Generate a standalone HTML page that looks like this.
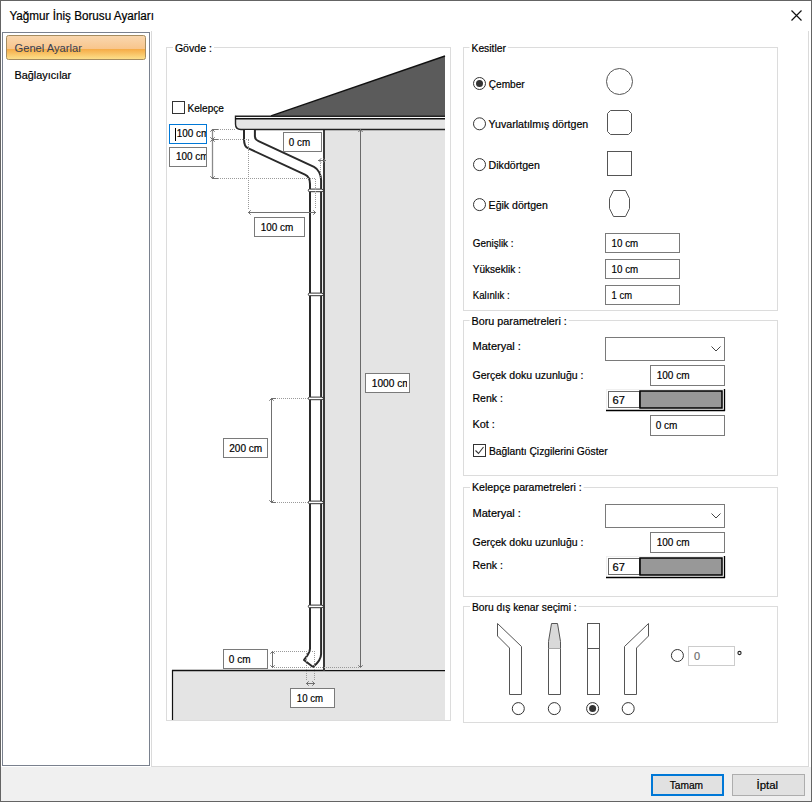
<!DOCTYPE html>
<html><head><meta charset="utf-8"><style>
html,body{margin:0;padding:0;background:#fff;}
svg{display:block;font-family:"Liberation Sans",sans-serif;} text{stroke:currentColor;stroke-width:0.2px;}
</style></head><body>
<svg width="812" height="802" viewBox="0 0 812 802">
<rect x="0" y="0" width="812" height="802" fill="#ffffff"/>
<rect x="1" y="767" width="810" height="34" fill="#f0f0f0"/>
<rect x="0.5" y="0.5" width="811" height="801" fill="none" stroke="#646464" stroke-width="1"/>
<rect x="2.5" y="32.5" width="147" height="733" fill="#fff" stroke="#7a818e" stroke-width="1"/>
<line x1="151.5" y1="31" x2="151.5" y2="767" stroke="#dadada" stroke-width="1"/>
<line x1="808.5" y1="31" x2="808.5" y2="767" stroke="#dadada" stroke-width="1"/>
<line x1="151" y1="766.5" x2="809" y2="766.5" stroke="#dadada" stroke-width="1"/>
<defs><linearGradient id="sel" x1="0" y1="0" x2="0" y2="1"><stop offset="0" stop-color="#f9d8b0"/><stop offset="0.55" stop-color="#f8c58c"/><stop offset="0.56" stop-color="#f5aa45"/><stop offset="1" stop-color="#fde28e"/></linearGradient></defs>
<rect x="6.5" y="35.5" width="139" height="24" rx="2" fill="url(#sel)" stroke="#a58c60"/>
<text x="9.4" y="20" font-size="12" fill="#000" style="color:#000" text-anchor="start" textLength="144.5" lengthAdjust="spacingAndGlyphs">Yağmur İniş Borusu Ayarları</text>
<path d="M791.5 10.5 L801.5 20.5 M801.5 10.5 L791.5 20.5" stroke="#111" stroke-width="1.2" fill="none"/>
<text x="14.5" y="52" font-size="11.5" fill="#3a4152" style="color:#3a4152;stroke-width:0.05px" text-anchor="start" textLength="67.4" lengthAdjust="spacingAndGlyphs">Genel Ayarlar</text>
<text x="14.5" y="78.6" font-size="11.5" fill="#000" style="color:#000" text-anchor="start" textLength="56.7" lengthAdjust="spacingAndGlyphs">Bağlayıcılar</text>
<line x1="166.5" y1="47" x2="166.5" y2="721" stroke="#dcdcdc" stroke-width="1"/>
<line x1="450.5" y1="47" x2="450.5" y2="721" stroke="#dcdcdc" stroke-width="1"/>
<line x1="166" y1="720.5" x2="451" y2="720.5" stroke="#dcdcdc" stroke-width="1"/>
<line x1="166" y1="47.5" x2="173" y2="47.5" stroke="#dcdcdc" stroke-width="1"/>
<line x1="214" y1="47.5" x2="451" y2="47.5" stroke="#dcdcdc" stroke-width="1"/>
<text x="174.9" y="51.8" font-size="11" fill="#000" style="color:#000" text-anchor="start" textLength="37" lengthAdjust="spacingAndGlyphs">Gövde :</text>
<line x1="463.5" y1="47" x2="463.5" y2="311" stroke="#dcdcdc" stroke-width="1"/>
<line x1="777.5" y1="47" x2="777.5" y2="311" stroke="#dcdcdc" stroke-width="1"/>
<line x1="463" y1="310.5" x2="778" y2="310.5" stroke="#dcdcdc" stroke-width="1"/>
<line x1="463" y1="47.5" x2="469.5" y2="47.5" stroke="#dcdcdc" stroke-width="1"/>
<line x1="507.9" y1="47.5" x2="778" y2="47.5" stroke="#dcdcdc" stroke-width="1"/>
<text x="471.5" y="51.7" font-size="11" fill="#000" style="color:#000" text-anchor="start" textLength="34.4" lengthAdjust="spacingAndGlyphs">Kesitler</text>
<line x1="463.5" y1="320" x2="463.5" y2="476" stroke="#dcdcdc" stroke-width="1"/>
<line x1="777.5" y1="320" x2="777.5" y2="476" stroke="#dcdcdc" stroke-width="1"/>
<line x1="463" y1="475.5" x2="778" y2="475.5" stroke="#dcdcdc" stroke-width="1"/>
<line x1="463" y1="320.5" x2="469.6" y2="320.5" stroke="#dcdcdc" stroke-width="1"/>
<line x1="568.8000000000001" y1="320.5" x2="778" y2="320.5" stroke="#dcdcdc" stroke-width="1"/>
<text x="471.6" y="325" font-size="11" fill="#000" style="color:#000" text-anchor="start" textLength="95.2" lengthAdjust="spacingAndGlyphs">Boru parametreleri :</text>
<line x1="463.5" y1="487" x2="463.5" y2="597" stroke="#dcdcdc" stroke-width="1"/>
<line x1="777.5" y1="487" x2="777.5" y2="597" stroke="#dcdcdc" stroke-width="1"/>
<line x1="463" y1="596.5" x2="778" y2="596.5" stroke="#dcdcdc" stroke-width="1"/>
<line x1="463" y1="487.5" x2="470" y2="487.5" stroke="#dcdcdc" stroke-width="1"/>
<line x1="583.7" y1="487.5" x2="778" y2="487.5" stroke="#dcdcdc" stroke-width="1"/>
<text x="472" y="491" font-size="11" fill="#000" style="color:#000" text-anchor="start" textLength="109.7" lengthAdjust="spacingAndGlyphs">Kelepçe parametreleri :</text>
<line x1="463.5" y1="606" x2="463.5" y2="723" stroke="#dcdcdc" stroke-width="1"/>
<line x1="777.5" y1="606" x2="777.5" y2="723" stroke="#dcdcdc" stroke-width="1"/>
<line x1="463" y1="722.5" x2="778" y2="722.5" stroke="#dcdcdc" stroke-width="1"/>
<line x1="463" y1="606.5" x2="470" y2="606.5" stroke="#dcdcdc" stroke-width="1"/>
<line x1="578.7" y1="606.5" x2="778" y2="606.5" stroke="#dcdcdc" stroke-width="1"/>
<text x="472" y="610.7" font-size="11" fill="#000" style="color:#000" text-anchor="start" textLength="104.7" lengthAdjust="spacingAndGlyphs">Boru dış kenar seçimi :</text>
<circle cx="479.5" cy="83.5" r="6" fill="#fff" stroke="#333" stroke-width="1"/>
<circle cx="479.5" cy="83.5" r="3.5" fill="#333"/>
<text x="488.7" y="87.9" font-size="11" fill="#000" style="color:#000" text-anchor="start" textLength="36" lengthAdjust="spacingAndGlyphs">Çember</text>
<circle cx="479.5" cy="123.8" r="6" fill="#fff" stroke="#333" stroke-width="1"/>
<text x="488.6" y="128.1" font-size="11" fill="#000" style="color:#000" text-anchor="start" textLength="99.6" lengthAdjust="spacingAndGlyphs">Yuvarlatılmış dörtgen</text>
<circle cx="479.5" cy="164.6" r="6" fill="#fff" stroke="#333" stroke-width="1"/>
<text x="488.6" y="168.7" font-size="11" fill="#000" style="color:#000" text-anchor="start" textLength="51.3" lengthAdjust="spacingAndGlyphs">Dikdörtgen</text>
<circle cx="479.5" cy="204.6" r="6" fill="#fff" stroke="#333" stroke-width="1"/>
<text x="488.6" y="208.5" font-size="11" fill="#000" style="color:#000" text-anchor="start" textLength="59.2" lengthAdjust="spacingAndGlyphs">Eğik dörtgen</text>
<circle cx="619.5" cy="81.5" r="13" fill="none" stroke="#555"/>
<path d="M610.5 110.5 H628.5 L631.5 113.5 V131.5 L628.5 134.5 H610.5 L607.5 131.5 V113.5 Z" fill="none" stroke="#555"/>
<rect x="607.5" y="151.5" width="24" height="24" fill="none" stroke="#555" stroke-width="1"/>
<path d="M613.5 190.5 H625.5 L629.5 198.5 V208.5 L625.5 216.5 H613.5 L609.5 208.5 V198.5 Z" fill="none" stroke="#555"/>
<text x="472.8" y="247.3" font-size="11" fill="#000" style="color:#000" text-anchor="start" textLength="40.8" lengthAdjust="spacingAndGlyphs">Genişlik :</text>
<text x="472.8" y="273" font-size="11" fill="#000" style="color:#000" text-anchor="start" textLength="48" lengthAdjust="spacingAndGlyphs">Yükseklik :</text>
<text x="472.8" y="299" font-size="11" fill="#000" style="color:#000" text-anchor="start" textLength="37" lengthAdjust="spacingAndGlyphs">Kalınlık :</text>
<rect x="605.5" y="233.5" width="74" height="19" fill="#fff" stroke="#7a7a7a" stroke-width="1"/>
<text x="611.6" y="246.8" font-size="11" fill="#000" style="color:#000" text-anchor="start" textLength="26.6" lengthAdjust="spacingAndGlyphs">10 cm</text>
<rect x="605.5" y="259.5" width="74" height="19" fill="#fff" stroke="#7a7a7a" stroke-width="1"/>
<text x="611.6" y="272.9" font-size="11" fill="#000" style="color:#000" text-anchor="start" textLength="26.6" lengthAdjust="spacingAndGlyphs">10 cm</text>
<rect x="605.5" y="285.5" width="74" height="19" fill="#fff" stroke="#7a7a7a" stroke-width="1"/>
<text x="611.6" y="299" font-size="11" fill="#000" style="color:#000" text-anchor="start" textLength="20.4" lengthAdjust="spacingAndGlyphs">1 cm</text>
<text x="472.5" y="349.9" font-size="11" fill="#000" style="color:#000" text-anchor="start" textLength="48.4" lengthAdjust="spacingAndGlyphs">Materyal :</text>
<text x="472.5" y="378.9" font-size="11" fill="#000" style="color:#000" text-anchor="start" textLength="111" lengthAdjust="spacingAndGlyphs">Gerçek doku uzunluğu :</text>
<text x="472.5" y="401.8" font-size="11" fill="#000" style="color:#000" text-anchor="start" textLength="30.4" lengthAdjust="spacingAndGlyphs">Renk :</text>
<rect x="605.5" y="337.5" width="119" height="23" fill="#fff" stroke="#7a7a7a" stroke-width="1"/>
<path d="M711.5 346.5 L716 351 L720.5 346.5" fill="none" stroke="#444" stroke-width="1"/>
<rect x="650.5" y="365.5" width="74" height="20" fill="#fff" stroke="#7a7a7a" stroke-width="1"/>
<text x="656.7" y="379.1" font-size="11" fill="#000" style="color:#000" text-anchor="start" textLength="32.8" lengthAdjust="spacingAndGlyphs">100 cm</text>
<line x1="606" y1="389.5" x2="724" y2="389.5" stroke="#f0f0f0" stroke-width="1"/>
<line x1="606.5" y1="389" x2="606.5" y2="410" stroke="#f0f0f0" stroke-width="1"/>
<rect x="608.5" y="391.5" width="31" height="16" fill="#fff" stroke="#6a6a6a" stroke-width="1"/>
<rect x="640" y="391" width="82" height="17" fill="#989898" stroke="#000" stroke-width="1.5"/>
<line x1="724.5" y1="389" x2="724.5" y2="411" stroke="#000" stroke-width="1.3"/>
<line x1="606" y1="410.5" x2="725" y2="410.5" stroke="#000" stroke-width="1.3"/>
<text x="612.6" y="404" font-size="11" fill="#000" style="color:#000" text-anchor="start" textLength="12.4" lengthAdjust="spacingAndGlyphs">67</text>
<text x="472.5" y="428" font-size="11" fill="#000" style="color:#000" text-anchor="start" textLength="22.4" lengthAdjust="spacingAndGlyphs">Kot :</text>
<rect x="650.5" y="415.5" width="74" height="20" fill="#fff" stroke="#7a7a7a" stroke-width="1"/>
<text x="655.7" y="429.1" font-size="11" fill="#000" style="color:#000" text-anchor="start" textLength="21.7" lengthAdjust="spacingAndGlyphs">0 cm</text>
<rect x="473.5" y="444.5" width="12" height="12" fill="#fff" stroke="#333" stroke-width="1"/>
<path d="M475.5 450.5 L478.5 453.5 L483.5 447" fill="none" stroke="#333" stroke-width="1.1"/>
<text x="488.9" y="454.7" font-size="11" fill="#000" style="color:#000" text-anchor="start" textLength="118.8" lengthAdjust="spacingAndGlyphs">Bağlantı Çizgilerini Göster</text>
<text x="472.5" y="516.9" font-size="11" fill="#000" style="color:#000" text-anchor="start" textLength="48.4" lengthAdjust="spacingAndGlyphs">Materyal :</text>
<text x="472.5" y="545.9" font-size="11" fill="#000" style="color:#000" text-anchor="start" textLength="111" lengthAdjust="spacingAndGlyphs">Gerçek doku uzunluğu :</text>
<text x="472.5" y="568.8" font-size="11" fill="#000" style="color:#000" text-anchor="start" textLength="30.4" lengthAdjust="spacingAndGlyphs">Renk :</text>
<rect x="605.5" y="504.5" width="119" height="23" fill="#fff" stroke="#7a7a7a" stroke-width="1"/>
<path d="M711.5 513.5 L716 518 L720.5 513.5" fill="none" stroke="#444" stroke-width="1"/>
<rect x="650.5" y="532.5" width="74" height="20" fill="#fff" stroke="#7a7a7a" stroke-width="1"/>
<text x="656.7" y="546.1" font-size="11" fill="#000" style="color:#000" text-anchor="start" textLength="32.8" lengthAdjust="spacingAndGlyphs">100 cm</text>
<line x1="606" y1="556.5" x2="724" y2="556.5" stroke="#f0f0f0" stroke-width="1"/>
<line x1="606.5" y1="556" x2="606.5" y2="577" stroke="#f0f0f0" stroke-width="1"/>
<rect x="608.5" y="558.5" width="31" height="16" fill="#fff" stroke="#6a6a6a" stroke-width="1"/>
<rect x="640" y="558" width="82" height="17" fill="#989898" stroke="#000" stroke-width="1.5"/>
<line x1="724.5" y1="556" x2="724.5" y2="578" stroke="#000" stroke-width="1.3"/>
<line x1="606" y1="577.5" x2="725" y2="577.5" stroke="#000" stroke-width="1.3"/>
<text x="612.6" y="571" font-size="11" fill="#000" style="color:#000" text-anchor="start" textLength="12.4" lengthAdjust="spacingAndGlyphs">67</text>
<path d="M497.5 623.5 V636 L509.5 648 V694.5 H521.5 V646.5 Z" fill="#fff" stroke="#555"/>
<path d="M551.5 623.5 H557.5 L560.5 641.5 V648.5 H548.5 V641.5 Z" fill="#d9d9d9" stroke="#555"/>
<path d="M548.5 648.5 V694.5 H560.5 V648.5" fill="#fff" stroke="#555"/>
<rect x="587.5" y="623.5" width="12" height="71" fill="#fff" stroke="#555" stroke-width="1"/>
<line x1="587.5" y1="648.5" x2="599.5" y2="648.5" stroke="#555" stroke-width="1"/>
<path d="M648.5 623.5 V636 L636.5 648 V694.5 H624.5 V646.5 Z" fill="#fff" stroke="#555"/>
<circle cx="518.3" cy="708.6" r="6" fill="#fff" stroke="#333" stroke-width="1"/>
<circle cx="554.3" cy="708.6" r="6" fill="#fff" stroke="#333" stroke-width="1"/>
<circle cx="592.6" cy="708.6" r="6" fill="#fff" stroke="#333" stroke-width="1"/>
<circle cx="592.6" cy="708.6" r="3.5" fill="#333"/>
<circle cx="628.2" cy="708.6" r="6" fill="#fff" stroke="#333" stroke-width="1"/>
<circle cx="677.4" cy="655.5" r="6" fill="#fff" stroke="#333" stroke-width="1"/>
<rect x="688.5" y="646.5" width="46" height="19" fill="#fff" stroke="#cccccc" stroke-width="1"/>
<text x="694" y="660" font-size="11" fill="#6d6d6d" style="color:#6d6d6d" text-anchor="start">0</text>
<circle cx="739.5" cy="653" r="1.6" fill="none" stroke="#222" stroke-width="1.1"/>
<rect x="652" y="775" width="71" height="20" fill="#e1e1e1" stroke="#0078d7" stroke-width="2"/>
<text x="686.4" y="789" font-size="11.5" fill="#000" style="color:#000" text-anchor="middle" textLength="33.4" lengthAdjust="spacingAndGlyphs">Tamam</text>
<rect x="732.5" y="774.5" width="72" height="21" fill="#e1e1e1" stroke="#adadad" stroke-width="1"/>
<text x="767.3" y="789" font-size="11.5" fill="#000" style="color:#000" text-anchor="middle" textLength="21.6" lengthAdjust="spacingAndGlyphs">İptal</text>
<rect x="172" y="671" width="273" height="49" fill="#e4e4e4"/>
<line x1="172.5" y1="670" x2="172.5" y2="720" stroke="#111" stroke-width="1.2"/>
<line x1="172" y1="670.5" x2="445" y2="670.5" stroke="#111" stroke-width="1.5"/>
<rect x="325" y="130" width="120" height="540" fill="#e4e4e4"/>
<line x1="324" y1="129" x2="324" y2="671" stroke="#3a3a3a" stroke-width="2"/>
<path d="M271 116 L445 56 V116 Z" fill="#5b5b5b"/>
<path d="M271 115.8 L445 56" stroke="#111" stroke-width="1.4"/>
<path d="M235.5 116.5 H445 V129.5 H241 Q235.5 129.5 235.5 124 Z" fill="#e5e5e5"/>
<path d="M445 116.3 H235.5 V124 Q235.5 129.5 241 129.5 H445" fill="none" stroke="#222" stroke-width="1.4"/>
<rect x="236.3" y="117.2" width="208.7" height="1" fill="#fff"/>
<line x1="235" y1="118.8" x2="445" y2="118.8" stroke="#111" stroke-width="1.6"/>
<line x1="360.5" y1="129" x2="360.5" y2="667" stroke="#6a6a6a" stroke-width="1"/>
<path d="M244 130 V139 C244 145 245.5 147.6 248.4 148.4 L305 174.7 C308.5 176.3 310 179 310 184 V648.5 C310 653 307 656 304 660 L313 667 C318 663 321.1 659 321.1 654 V180 C321.1 175 318.5 169 314 166.8 L258.5 141.2 C256 140 254.9 139 254.9 136.5 V130" fill="#fff" stroke="#2a2a2a" stroke-width="2" stroke-linejoin="round"/>
<path d="M309.5 189.1 H322 L324 190.4 L322 191.70000000000002 H309.5 Q308.3 191.70000000000002 308.3 190.4 Q308.3 189.1 309.5 189.1 Z" fill="#fff" stroke="#333" stroke-width="1"/>
<path d="M309.5 293.09999999999997 H322 L324 294.4 L322 295.7 H309.5 Q308.3 295.7 308.3 294.4 Q308.3 293.09999999999997 309.5 293.09999999999997 Z" fill="#fff" stroke="#333" stroke-width="1"/>
<path d="M309.5 397.09999999999997 H322 L324 398.4 L322 399.7 H309.5 Q308.3 399.7 308.3 398.4 Q308.3 397.09999999999997 309.5 397.09999999999997 Z" fill="#fff" stroke="#333" stroke-width="1"/>
<path d="M309.5 501.09999999999997 H322 L324 502.4 L322 503.7 H309.5 Q308.3 503.7 308.3 502.4 Q308.3 501.09999999999997 309.5 501.09999999999997 Z" fill="#fff" stroke="#333" stroke-width="1"/>
<path d="M309.5 605.1 H322 L324 606.4 L322 607.6999999999999 H309.5 Q308.3 607.6999999999999 308.3 606.4 Q308.3 605.1 309.5 605.1 Z" fill="#fff" stroke="#333" stroke-width="1"/>
<line x1="212.5" y1="129" x2="212.5" y2="179" stroke="#8a8a8a" stroke-width="1.3"/>
<path d="M210.3 131.7 L212.5 129.5 L214.7 131.7" fill="none" stroke="#707070" stroke-width="1"/>
<path d="M210.3 137.3 L212.5 139.5 L214.7 137.3" fill="none" stroke="#707070" stroke-width="1"/>
<path d="M210.3 141.7 L212.5 139.5 L214.7 141.7" fill="none" stroke="#707070" stroke-width="1"/>
<path d="M210.3 176.3 L212.5 178.5 L214.7 176.3" fill="none" stroke="#707070" stroke-width="1"/>
<line x1="212" y1="129.5" x2="218" y2="129.5" stroke="#707070" stroke-width="1"/>
<line x1="212" y1="139.5" x2="218" y2="139.5" stroke="#707070" stroke-width="1"/>
<line x1="212" y1="178.5" x2="218" y2="178.5" stroke="#707070" stroke-width="1"/>
<line x1="218" y1="129.5" x2="236" y2="129.5" stroke="#9a9a9a" stroke-width="1" stroke-dasharray="1 1"/>
<line x1="218" y1="139.5" x2="250" y2="139.5" stroke="#9a9a9a" stroke-width="1" stroke-dasharray="1 1"/>
<line x1="218" y1="178.5" x2="316" y2="178.5" stroke="#9a9a9a" stroke-width="1" stroke-dasharray="1 1"/>
<line x1="248.5" y1="140" x2="248.5" y2="209" stroke="#9a9a9a" stroke-width="1" stroke-dasharray="1 1"/>
<line x1="315.5" y1="179" x2="315.5" y2="209" stroke="#9a9a9a" stroke-width="1" stroke-dasharray="1 1"/>
<line x1="248" y1="212.5" x2="316" y2="212.5" stroke="#707070" stroke-width="1"/>
<path d="M250.7 210.3 L248.5 212.5 L250.7 214.7" fill="none" stroke="#707070" stroke-width="1"/>
<path d="M313.3 210.3 L315.5 212.5 L313.3 214.7" fill="none" stroke="#707070" stroke-width="1"/>
<line x1="320.5" y1="163" x2="320.5" y2="178" stroke="#9a9a9a" stroke-width="1" stroke-dasharray="1 1"/>
<line x1="318" y1="160.5" x2="326" y2="160.5" stroke="#707070" stroke-width="1"/>
<path d="M323.3 158.3 L325.5 160.5 L323.3 162.7" fill="none" stroke="#707070" stroke-width="1"/>
<path d="M321.2 158.3 L319 160.5 L321.2 162.7" fill="none" stroke="#707070" stroke-width="1"/>
<line x1="271.5" y1="398" x2="271.5" y2="503" stroke="#707070" stroke-width="1"/>
<path d="M269.3 400.7 L271.5 398.5 L273.7 400.7" fill="none" stroke="#707070" stroke-width="1"/>
<path d="M269.3 500.3 L271.5 502.5 L273.7 500.3" fill="none" stroke="#707070" stroke-width="1"/>
<line x1="271" y1="398.5" x2="276" y2="398.5" stroke="#707070" stroke-width="1"/>
<line x1="271" y1="502.5" x2="276" y2="502.5" stroke="#707070" stroke-width="1"/>
<line x1="277" y1="398.5" x2="309" y2="398.5" stroke="#9a9a9a" stroke-width="1" stroke-dasharray="1 1"/>
<line x1="277" y1="502.5" x2="309" y2="502.5" stroke="#9a9a9a" stroke-width="1" stroke-dasharray="1 1"/>
<line x1="272.5" y1="651" x2="272.5" y2="668" stroke="#707070" stroke-width="1"/>
<path d="M270.3 653.7 L272.5 651.5 L274.7 653.7" fill="none" stroke="#707070" stroke-width="1"/>
<path d="M270.3 665.3 L272.5 667.5 L274.7 665.3" fill="none" stroke="#707070" stroke-width="1"/>
<line x1="274" y1="651.5" x2="316" y2="651.5" stroke="#9a9a9a" stroke-width="1" stroke-dasharray="1 1"/>
<line x1="274" y1="667.5" x2="360" y2="667.5" stroke="#9a9a9a" stroke-width="1" stroke-dasharray="1 1"/>
<line x1="306.5" y1="653" x2="306.5" y2="681" stroke="#9a9a9a" stroke-width="1" stroke-dasharray="1 1"/>
<line x1="314.5" y1="653" x2="314.5" y2="681" stroke="#9a9a9a" stroke-width="1" stroke-dasharray="1 1"/>
<line x1="306" y1="683.5" x2="315" y2="683.5" stroke="#707070" stroke-width="1"/>
<path d="M308.7 681.3 L306.5 683.5 L308.7 685.7" fill="none" stroke="#707070" stroke-width="1"/>
<path d="M312.3 681.3 L314.5 683.5 L312.3 685.7" fill="none" stroke="#707070" stroke-width="1"/>
<path d="M358.3 665.3 L360.5 667.5 L362.7 665.3" fill="none" stroke="#707070" stroke-width="1"/>
<path d="M358.3 132.0 L360.5 129.8 L362.7 132.0" fill="none" stroke="#707070" stroke-width="1"/>
<rect x="172.5" y="101.5" width="12" height="12" fill="#fff" stroke="#333" stroke-width="1"/>
<text x="187.5" y="111.6" font-size="11" fill="#000" style="color:#000" text-anchor="start" textLength="36.4" lengthAdjust="spacingAndGlyphs">Kelepçe</text>
<rect x="169.5" y="124.5" width="37" height="19" fill="#fff" stroke="#0078d7" stroke-width="1"/>
<clipPath id="c1"><rect x="170" y="125" width="36" height="18"/></clipPath>
<text x="176.8" y="137" font-size="11" fill="#000" style="color:#000" text-anchor="start" textLength="32.5" lengthAdjust="spacingAndGlyphs" clip-path="url(#c1)">100 cm</text>
<line x1="175.5" y1="128" x2="175.5" y2="141" stroke="#000" stroke-width="1"/>
<rect x="169.5" y="147.5" width="37" height="19" fill="#fff" stroke="#7a7a7a" stroke-width="1"/>
<clipPath id="c2"><rect x="170" y="148" width="36" height="18"/></clipPath>
<text x="175.9" y="160.2" font-size="11" fill="#000" style="color:#000" text-anchor="start" textLength="32.5" lengthAdjust="spacingAndGlyphs" clip-path="url(#c2)">100 cm</text>
<rect x="283.5" y="132.5" width="38" height="19" fill="#fff" stroke="#7a7a7a" stroke-width="1"/>
<text x="288.8" y="145.5" font-size="11" fill="#000" style="color:#000" text-anchor="start" textLength="21.3" lengthAdjust="spacingAndGlyphs">0 cm</text>
<rect x="254.5" y="217.5" width="50" height="19" fill="#fff" stroke="#7a7a7a" stroke-width="1"/>
<text x="260.7" y="230.8" font-size="11" fill="#000" style="color:#000" text-anchor="start" textLength="32.5" lengthAdjust="spacingAndGlyphs">100 cm</text>
<rect x="365.5" y="373.5" width="44" height="19" fill="#fff" stroke="#7a7a7a" stroke-width="1"/>
<clipPath id="c3"><rect x="366" y="374" width="41" height="18"/></clipPath>
<text x="371.8" y="387.2" font-size="11" fill="#000" style="color:#000" text-anchor="start" textLength="39" lengthAdjust="spacingAndGlyphs" clip-path="url(#c3)">1000 cm</text>
<rect x="223.5" y="438.5" width="44" height="19" fill="#fff" stroke="#7a7a7a" stroke-width="1"/>
<text x="229.2" y="451.9" font-size="11" fill="#000" style="color:#000" text-anchor="start" textLength="33" lengthAdjust="spacingAndGlyphs">200 cm</text>
<rect x="223.5" y="649.5" width="44" height="19" fill="#fff" stroke="#7a7a7a" stroke-width="1"/>
<text x="228.8" y="662.5" font-size="11" fill="#000" style="color:#000" text-anchor="start" textLength="21.7" lengthAdjust="spacingAndGlyphs">0 cm</text>
<rect x="290.5" y="688.5" width="44" height="19" fill="#fff" stroke="#7a7a7a" stroke-width="1"/>
<text x="296.8" y="701.5" font-size="11" fill="#000" style="color:#000" text-anchor="start" textLength="26.2" lengthAdjust="spacingAndGlyphs">10 cm</text>
</svg></body></html>
